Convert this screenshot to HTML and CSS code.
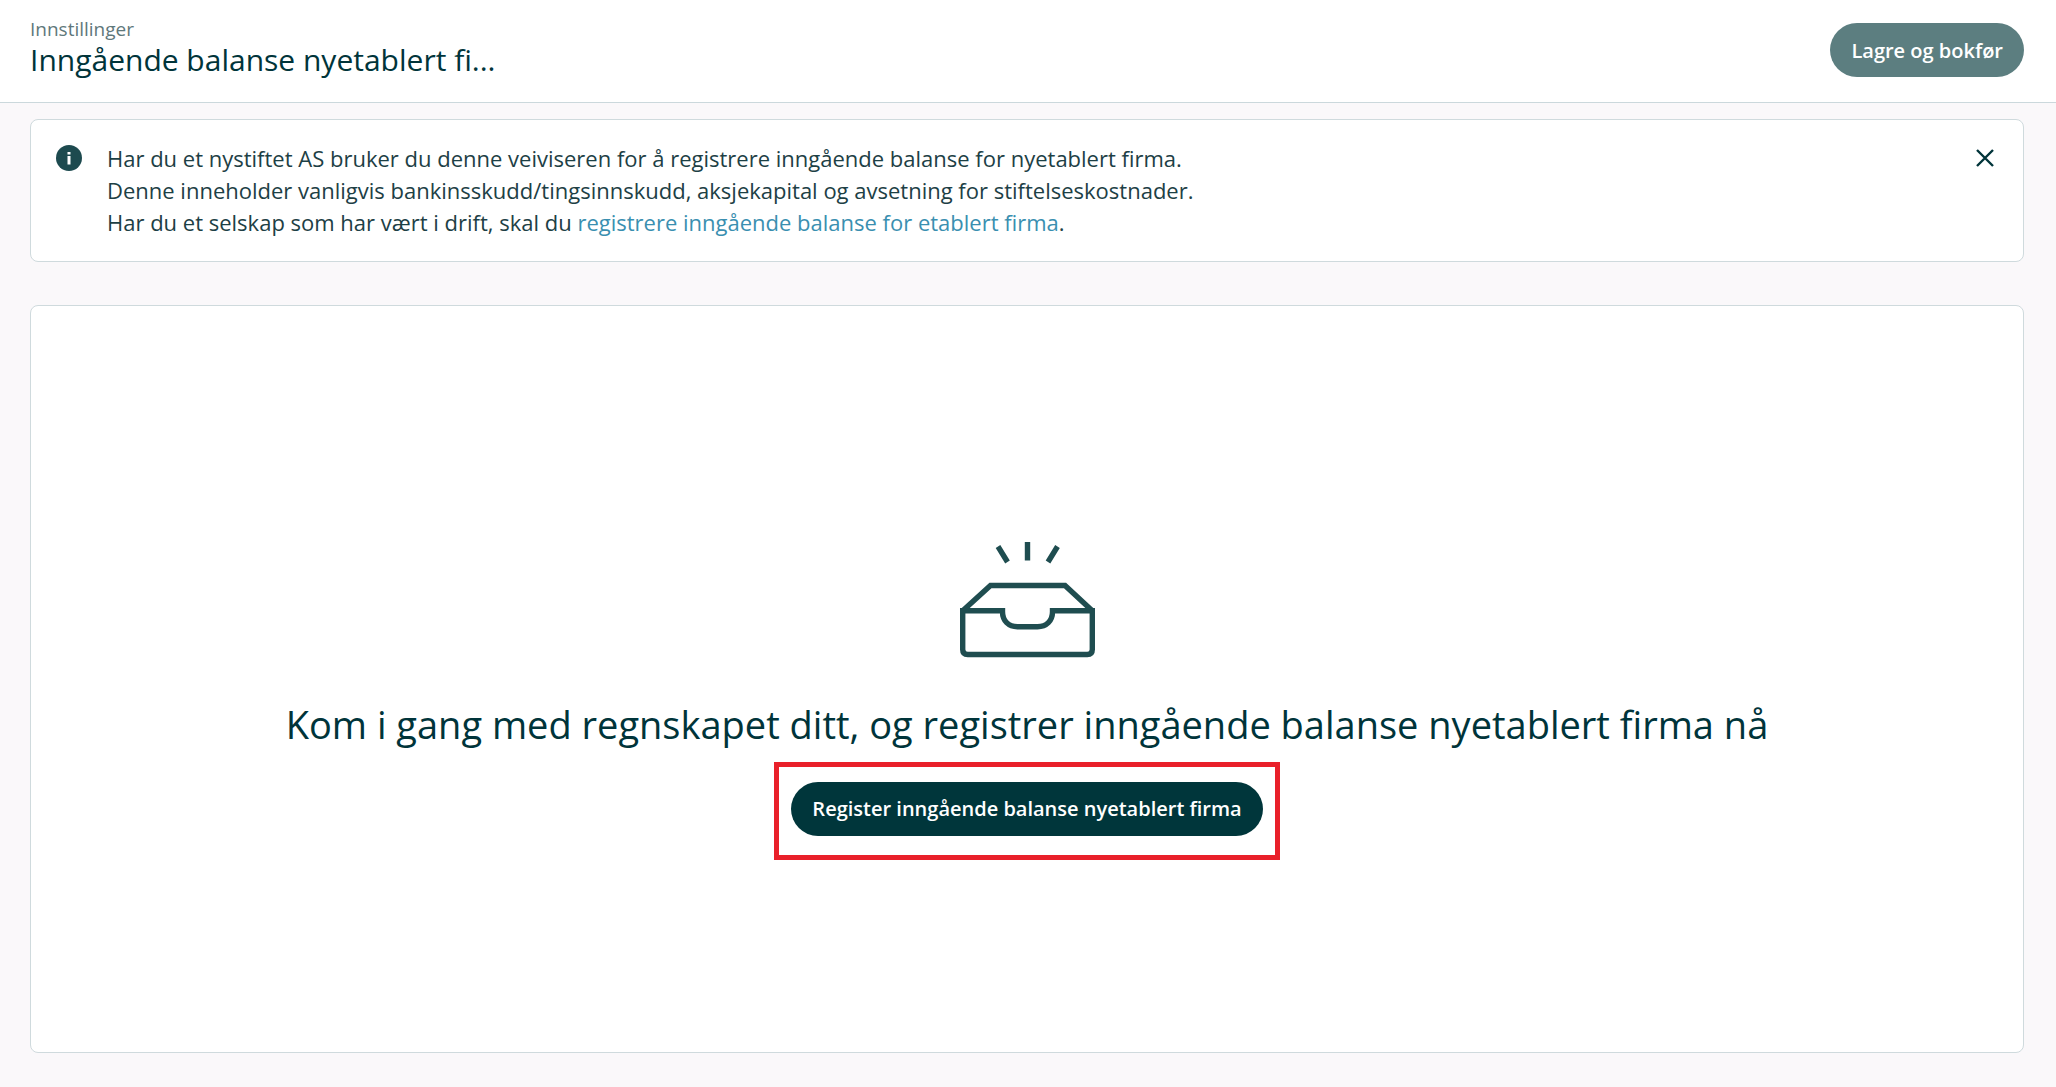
FILE: index.html
```html
<!DOCTYPE html>
<html lang="nb">
<head>
<meta charset="utf-8">
<meta name="viewport" content="width=device-width, initial-scale=1">
<title>Inngående balanse nyetablert firma</title>
<link rel="stylesheet" href="styles.css">
</head>
<body>
<header class="topbar">
  <div class="heading">
    <p class="breadcrumb">Innstillinger</p>
    <h1 class="title">Inngående balanse nyetablert fi...</h1>
  </div>
  <button class="button button-muted" type="button">Lagre og bokfør</button>
</header>
<main class="content">
  <section class="card notice">
    <svg class="info-icon" viewBox="0 0 26 26" aria-hidden="true">
      <circle cx="13" cy="13" r="13" fill="#1d4a4f"/>
      <path d="M11.500 7h3v2.600h-3zM11.500 11h3v8.500h-3z" fill="#fff"/>
    </svg>
    <p class="notice-text">Har du et nystiftet AS bruker du denne veiviseren for å registrere inngående balanse for nyetablert firma.<br>Denne inneholder vanligvis bankinsskudd/tingsinnskudd, aksjekapital og avsetning for stiftelseskostnader.<br>Har du et selskap som har vært i drift, skal du <a class="link" href="#etablert">registrere inngående balanse for etablert firma</a>.</p>
    <button class="close" type="button" aria-label="Lukk">
      <svg class="close-icon" viewBox="0 0 20 20" aria-hidden="true"><path d="M2 2l16 16M18 2L2 18" fill="none" stroke="#00343a" stroke-width="2.400"/></svg>
    </button>
  </section>
  <section class="card empty">
    <svg class="inbox-icon" viewBox="0 0 135 116" aria-hidden="true">
      <g fill="none" stroke="#1f4d50" stroke-width="5.400">
        <path d="M38 4.500L47.500 20M67.500 0v18.500M97.500 4.500L88 20"/>
        <path d="M3 68.500L30.500 43.500h74.500L132 68.500"/>
        <path d="M0 68.800h42.500v1c0 9 6 15 15 15h20c9 0 15-6 15-15v-1H135"/>
        <path d="M2.700 67v40.500q0 5 5 5h119.600q5 0 5-5V67"/>
      </g>
    </svg>
    <h2 class="empty-title">Kom i gang med regnskapet ditt, og registrer inngående balanse nyetablert firma nå</h2>
    <div class="highlight">
      <button class="button" type="button">Register inngående balanse nyetablert firma</button>
    </div>
  </section>
</main>
</body>
</html>
```
FILE: styles.css
```css
* {
  box-sizing: border-box;
}

body {
  display: flex;
  flex-direction: column;
  min-height: 100vh;
  margin: 0;
  background: #faf8fa;
  color: #1d4045;
  font-family: "Open Sans", "Noto Sans", sans-serif;
}

.topbar {
  display: flex;
  align-items: flex-start;
  justify-content: space-between;
  padding: 16px 32px 24px 30px;
  border-bottom: 1px solid #cbd8dc;
  background: #fff;
}

.breadcrumb {
  margin: 0;
  color: #5f787b;
  font-size: 19px;
  line-height: 26px;
}

.title {
  margin: 0;
  color: #00343a;
  font-size: 30px;
  font-weight: 400;
  line-height: 36px;
}

.button {
  height: 54px;
  padding: 0 21px;
  border: 0;
  border-radius: 27px;
  background: #00363b;
  color: #fff;
  font-family: inherit;
  font-size: 20px;
  font-weight: 600;
  white-space: nowrap;
}

.topbar .button {
  margin-top: 7px;
}

.button-muted {
  background: #5c7e80;
}

.content {
  display: flex;
  flex: 1;
  flex-direction: column;
  gap: 43px;
  padding: 16px 32px 34px 30px;
}

.card {
  border: 1px solid #cfdadd;
  border-radius: 8px;
  background: #fff;
}

.notice {
  display: flex;
  align-items: flex-start;
  padding: 22px 28px 23px 25px;
}

.info-icon {
  flex: none;
  width: 26px;
  height: 26px;
  margin: 3px 25px 0 0;
}

.notice-text {
  flex: 1;
  margin: 0;
  font-size: 22px;
  line-height: 32px;
}

.link {
  color: #3a8fb0;
  text-decoration: none;
}

.close {
  margin-top: 6px;
  padding: 0;
  border: 0;
  background: none;
}

.close-icon {
  display: block;
  width: 20px;
  height: 20px;
}

.empty {
  display: flex;
  flex: 1;
  flex-direction: column;
  align-items: center;
  justify-content: center;
  padding: 43px 24px 0;
}

.inbox-icon {
  width: 135px;
  height: 116px;
}

.empty-title {
  margin: 40px 0 12px;
  color: #00343a;
  font-size: 38px;
  font-weight: 400;
  line-height: 52px;
  text-align: center;
}

.highlight {
  padding: 15px 12px 19px;
  border: 5px solid #e9202a;
}
```
